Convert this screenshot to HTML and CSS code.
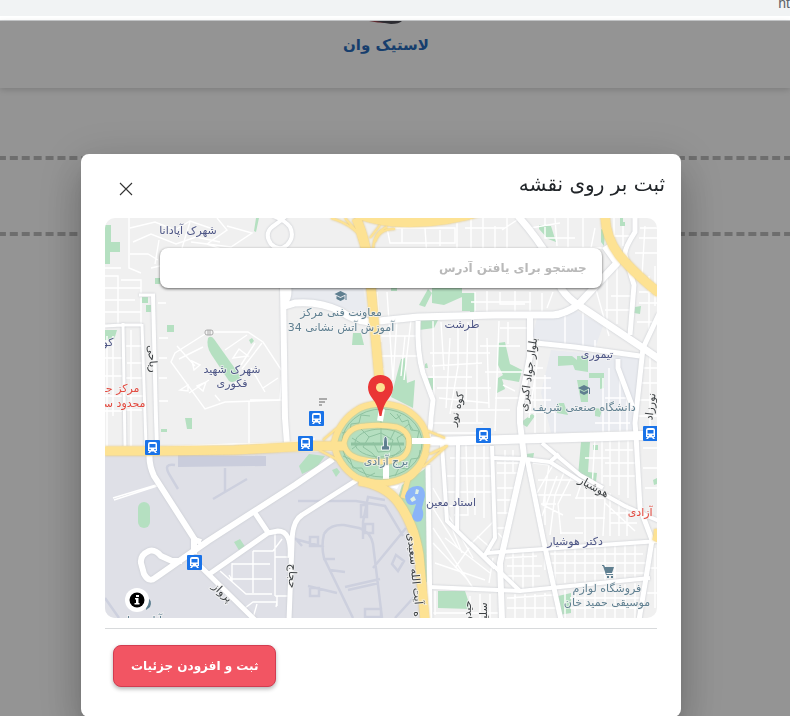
FILE: index.html
```html
<!DOCTYPE html>
<html lang="fa" dir="rtl">
<head>
<meta charset="utf-8">
<title>لاستیک وان</title>
<link rel="stylesheet" href="styles.css">
</head>
<body>

<div class="browser-bar" dir="ltr"><span>ht</span></div>

<!-- Page -->
<header class="site-header">
	<a class="logo" href="#">
		<svg width="44" height="4" viewBox="0 0 44 4"><path d="M5 0h14l4 2q-10 0-18-2z" fill="#a84a55"/><path d="M12 0h26q-3 3-11 3q-8-1-15-3z" fill="#4c4c55"/></svg>
		<span>لاستیک وان</span>
	</a>
</header>
<main class="site-main">
	<div class="dashed-box"></div>
</main>

<!-- Map modal -->
<div class="backdrop">
<div class="modal" role="dialog" aria-labelledby="modal-title">
	<div class="modal-header">
		<h2 id="modal-title">ثبت بر روی نقشه</h2>
		<button class="close" type="button" aria-label="بستن">
			<svg width="14" height="14" viewBox="0 0 14 14"><path d="M1 1l12 12M13 1L1 13" stroke="#333" stroke-width="1.1" fill="none"/></svg>
		</button>
	</div>

	<div class="map">
		<svg class="map-canvas" viewBox="0 0 552 400" preserveAspectRatio="xMidYMid slice">
			<defs>
				<g id="bus">
					<rect x="-7.500" y="-7.500" width="15" height="15" rx="1" fill="#1a73e8"/>
					<path d="M-4.500 -3.500q0-2 2-2h5q2 0 2 2v7h-1.500l1.500 2h-2l-1-1.500h-3l-1 1.500h-2l1.500-2h-1.500z" fill="#fff"/>
					<path d="M-3 -3.500h6v3.500h-6z" fill="#1a73e8"/>
					<circle cx="-2.500" cy="2" r=".8" fill="#1a73e8"/><circle cx="2.500" cy="2" r=".8" fill="#1a73e8"/>
				</g>
				<g id="school">
					<path d="M-6 -2L0 -5L6 -2L0 1z"/><path d="M-4 0L0 2L4 0V3L0 5L-4 3z"/><path d="M5 -2h1v6h-1z"/>
				</g>
			</defs>

			<!-- Land -->
			<rect width="552" height="400" fill="#f0f0f0"/>
			<path class="campus" d="M432 100l38-8 28 16-8 22-65-3zM446 132l88 8-6 72-82 3-10-40z"/>
			<path class="campus" d="M183 70h75l5 26-40-9h-38z"/>
			<path class="airport" d="M0 237L200 234L228 234L240 252L262 266L290 276L304 310L316 360L318 400H0z"/>

			<!-- Parks -->
			<g class="park">
				<path d="M0 7h6v17h9v10H5v12H0zM50 60h5v6h-5zM37 79h6v6h-6zM41 87h5v7h-5zM62 107h7v7h-7zM0 112h12l-3 10H0z"/>
				<path d="M103 120q3-3 6 1l27 38q-7 7-12 4l-18-27q-5-8-3-16z"/>
				<path d="M151 0h3l-3 14-2-1zM144 122l3-2 2 3-3 3zM80 200h7v11h-5zM56 211h6v3h-6z"/>
				<rect x="33" y="284" width="12" height="26" rx="6"/>
				<path d="M129 324l6-3 6 9-6 4zM194 248l10-12 16 2-8 11-15 7z"/>
				<path d="M227 252l5-2 3 4-4 5z"/>
				<path d="M327 70h30v9l-18 8-12-2zM357 75h13v18h-13zM314 87l9-16 4 4-7 14zM316 102h17l-4 8-15 2zM248 115h8l3 12h-12zM286 70h6v3h-6z"/>
				<path d="M296 141l4-1 2 25 8-3-2 28-22-11z M320 146l2-1 1 5h-3zM323 160h5v12h-3z"/>
				<path d="M434 7l12 1 5 16-8-3-9-10zM496 11l4 2-1 15-3-4zM515 0v8h5V4h-2V0zM530 89l6-1-1 8-6-1z"/>
				<path d="M393 125l7-1 5 22 12 6-3 12-17-3 3 10-8 4 1-15 5-3-5-10zM365 77l4-1v18h-4z"/>
				<path d="M453 138h14l5 4v-4h11v16l-13-2-2-5-15 1zM484 155h15v15l-4 1v-11h-11zM472 162h11v22h-7zM490 190l7 1-2 8-5-1zM452 185h7l4 12-11-2z"/>
				<path d="M415 205l12-9 3 2-8 11zM476 224h9l-2 30 9 1-1 9-10-6h-8z"/>
				<path d="M488 227h5v5h-5zM421 236l8-1-1 6-7-1z"/>
				<path d="M297 267l24-17 2 113-6 4-4-54-20-33zM333 373h27l6 18-33-1zM453 378l13-3v20l-12 2zM552 260l-4 2 1 5 3-1z"/>
			</g>
			<path class="airport-line" d="M73 241h88M70 247q-12-2-6 9l9 15M120 250v24M108 281l34-20" />
			<path class="apron" d="M73 237l88 1v10l-88 1z"/>
			<path class="airport-line" d="M193 283h58l29 5 18 30M280 282l-17-3-5 25 0 17M219 316q6-10 20-9l15 3q12 4 14 16l9 74M219 316q-3 12 0 24l29 60M268 350l33-40 M240 369l35-8M243 372l31-7M190 321l29 8M232 375l-29-7M218 341h12M225 352l15 2M0 380l14 20M290 400l20-22M256 287h6v12h-6zM260 306h8v9h-8zM205 319h8v9h-8zM205 370h9v8h-9zM291 337l8 6-6 10-6-7zM260 391h16v8h-16zM190 320l7 8"/>

			<!-- Side streets -->
			<g class="street">
				<path d="M24 0v50l12 5M0 50h16M25 10l25-6 20 8 15-9 20 7M28 24l18-8 25 10 20-7 24 5M25 36h18l10 6M54 22l-4 24M85 4l-8 26M112 0l10 12-20 14 14 5M122 8l25 7-21 14-40-5M68 45l-22 5"/>
				<path d="M0 58h13v48M0 70h16M0 82h17M0 94h17M16 62h20v44M16 70h20M17 82h13M16 94h20M2 118v112M8 118v80M26 112v118M0 140h17M0 158h17M0 178h17M0 193h17M21 128h16M22 145h16M21 160h16M22 178h16M21 192h16M53 85h8M54 120h9M54 140h8M54 160h8M54 183h9"/>
				<path d="M100 116L70 135l-4 9 34 47 20-7 58-2M108 114h35l15 10 19 29-2 29h-30M74 141l24-12M84 175l20-13M72 128l18 20M120 132l22-15M128 140l15-2-9-7zM95 147l-8-4 2 9zM75 172l8-5v6zM92 168l9-4-3 9zM150 125l-14 22M157 125l-20 26M146 150l14 24M158 170l15-10M144 184v44M115 183l-5-6M135 162l-15 10"/>
				<path d="M282 10h68v15h-65zM297 10v15M320 10l2 30M335 12v16M352 5v65M360 10h40M366 0v30M378 0v30M390 8v30M402 0v30M352 40h60M415 0l-18 12M272 74l4 50M282 74l6 88M292 102l-4 60M272 118h40M272 138h40M278 150l-2 17M300 118l-4 40M306 102l-7 60"/>
				<path d="M328 103l1 78M336 104l3 48M345 120l-4 70M353 103v45l-8 48M363 104l-2 80M372 104v100M382 120l2 70M394 103l-4 110M403 104v22M325 135h60M327 148l50-3M322 159h45M332 170h54M334 180l50 5M345 192h60M375 128h40M380 154h38M390 180h28M395 110h30M398 167l12 6"/>
				<path d="M370 74v23M382 73v23M395 74v12h25M410 73v23M425 74v23M437 75v20M366 84h60M448 74l-6 16M462 72v8"/>
				<path d="M440 0v20h30M450 0l2 28M463 0v30M478 0v30M490 10l-4 20M425 10l30-5M440 30h60M509 0v18h20M518 8v20M535 10h17M540 8l-3 50M534 20h18M530 35h22M512 48v58M502 58v48M490 68l14 50M506 78h20M500 92h27M534 74h18M534 85h20M532 104h20M544 58v54M550 48v40M460 98v30M478 90v42M490 122v12"/>
				<path d="M432 128v18l-8 54M438 150h-12M424 160h22M422 170h24M420 182h26M420 194h30M430 157v58M440 157v58M450 195v20M498 160v54M504 150v64M515 150v64M522 175v40M490 205h35M500 180h25M545 138v74M535 150h17M532 165h20M530 182h22M532 198h20"/>
			</g>
			<g class="street">
				<path d="M328 205h50M332 215h46M361 227l2 70h-14M370 225v72M379 228v72M345 240h42M342 258h46M342 274h46M343 288h20M328 270l40 70M328 290l25 40 M328 310l40 60M328 325l35 37M330 345l50 17M340 320l45 35M347 310l10 25M367 325l22-22M372 318l16 14M350 350l14-20"/>
				<path d="M392 245h22M392 255h21M392 270h17M392 282h15M392 295h13M392 310h10M400 232v64M408 232v22M388 340l-4 25M393 315l9 10M428 245l16 2-6 40 20 10M433 262h40M430 277h36M436 286h15M440 277v30M448 247l-16 28M452 258l-15 40M460 252l-10 25-5 40M468 256l-15 30 3 30M477 263l-6 18M480 263v60M490 268v50M470 280h30l-2 38M470 300h30M505 275v43M514 281v37M522 286v32M500 285l30 28M455 315h23M505 295h25M505 305h27"/>
				<path d="M490 220l-3 50M497 218v48M505 220v48M514 220v57M523 220v60M480 240h25M500 232h28M500 245h30M498 258h32M538 230h14M538 250h14M540 270h12M541 300h11"/>
				<path d="M408 334v38M418 334v38M428 332v40M400 340l32-2M402 348h35M400 358h35M443 345h100M446 355h95M440 332v20M450 330v35M460 329v36M470 329v36M480 328v36M490 328v36M500 327v35M510 327v35M520 326v35M530 326v35M445 336h93M402 380l46-3M402 390h50M410 376v24M420 376v24M430 376v24M440 375v25M460 372v28M470 370v30M480 370v30M490 369v31M500 368v32M510 367v33M520 366v34M530 365v35M465 380h72M465 390h70M550 330v60M545 350h7M542 375h10M330 373v24M365 378v22M375 376v24M385 376v24M328 395h65"/>
				<path d="M9 282l43-14M8 280l43-13M115 353l26 23h26M127 345v17l-3-5M127 346h38M125 361h42M148 333v42M148 333h20l9-12M170 315v63M170 339h14M140 390l8-6h24l-1 5M148 400l4-14M170 378h14M172 378v10"/>
			</g>

			<!-- Roads -->
			<g class="road">
				<path class="w3" d="M34 77H50M0 108L17 107L37 107M18 105L20 230M37 106L41 228"/>
				<path class="w4" d="M48 77L51 200L52 230"/>
				<path class="w4" d="M168 -2q13 5 17 11q5 10-3 18q-8 7-16-1q-7-10 1-17q9-6 16-13"/>
				<path class="w6" d="M172 29L178 70L180 200L182 226M180 84q5-5 3-18"/>
				<path class="w7" d="M180 88L190 85Q215 83 235 93Q250 103 264 104L313 99L390 97H448Q460 96 473 87"/>
				<path class="w7" d="M413 -2Q434 22 445 42L456 70Q463 81 475 88L538 130L554 141M472 88L512 45L500 28"/>
				<path class="w5" d="M525 117L529 67L520 37Q519 31 530 14V0M554 96L538 130L530 205L531 217L535 290L547 322L541 360L534 402"/>
				<path class="w6" d="M425 98V138L415 190V205L419 238L395 345L397 402"/>
				<path class="w5" d="M422 240L438 320L456 402M431 125L470 129L535 138M513 141V150L528 190"/>
				<path class="w5" d="M313 103Q312 135 318 155L328 182L326 200Q326 213 322 221"/>
				<path class="w4" d="M388 240L420 241L445 244L475 263L520 288L554 303M437 225L475 257L498 270M446 243L454 236"/>
				<path class="w4" d="M382 335L554 323M365 325L415 373M325 369L415 373L545 360M337 227L342 303L390 350M353 227L352 313M387 228L390 320L380 337"/>
				<path class="w5" d="M323 247L325 402"/>
				<path class="w9" d="M307 223H345L554 217"/>
				<path class="w6" d="M45 233Q43 245 49 258L90 322L96 324M228 241L190 267L103 323L50 360Q44 365 39 356L36 345Q35 337 44 333Q50 331 56 338L67 343H77M89 319V336"/>
				<path class="w5" d="M252 262L197 297Q187 303 187 325L184 402M185 340Q187 313 173 313L163 315L103 357M150 295L164 316M90 343L150 402"/>
			</g>
			<path class="street" d="M0 229h50l80-3 50-1 30-4" stroke-width="2"/>

			<!-- Azadi roundabout and highways -->
			<ellipse cx="277" cy="225" rx="45" ry="38" fill="#b5dfc0"/>
			<g class="garden">
				<ellipse cx="276" cy="225" rx="26" ry="14"/><ellipse cx="277" cy="225" rx="40" ry="34"/>
				<path d="M276 200v25M256 211l8 8-6 10 9 6 7 8 12-3 10-8-4-12 8-5M264 219l12-4 12 7-3 11-12 1-5-10M290 212l-5 10M247 220l8 5-8 6M292 196l5 8 6-2 3 10 8 1-2 9M237 215l8-2 1-7 8-1 2-8 9 1M238 238l7 3 3 9 9 0 5 9 8-4M290 258l4-8 9 1 3-10 8-1 1-8M285 195l6 6 5-4M298 211l6-5 4 6"/>
				<path d="M246 226h53" stroke-width="3"/>
			</g>
			<path class="road-plain" d="M281 243v18M277 191l-2 12"/>
			<g class="highway">
				<path class="w9" d="M0 233H50L130 232L205 228H240"/>
				<path class="w9" d="M251 0Q263 25 266 70L274 158V184"/>
				<path d="M238 -7Q262 9 305 9Q345 9 390 -6V-10H238z" fill="#fde293" stroke="none"/>
				<path class="w2" d="M240 0L252 14L257 30M226 0Q250 7 260 25M282 9Q268 15 268 33M275 7L265 20M290 11Q275 10 270 24"/>
				<path class="w9" d="M500 -2Q501 20 514 37Q529 55 554 75"/>
				<path class="w6" d="M229 225Q234 202 255 190Q276 181 300 191Q321 203 322 223Q321 246 303 258Q279 271 252 260Q232 247 229 225z"/>
				<path class="w5" d="M239 225Q242 209 260 208Q276 206 292 209Q304 213 304 224Q304 240 290 242Q275 246 255 241Q240 237 239 225z"/>
				<path class="w9" d="M254 263Q280 267 293 284Q309 306 314 337L320 402"/>
				<path class="w5" d="M322 234Q314 255 303 261L298 280"/>
				<path class="w2" d="M218 222L232 210M214 232L235 243M323 213L340 220M325 236L342 228L318 249"/>
				<path class="w6" d="M550 323q2-4 2-12"/>
			</g>
			<path d="M285 269l9-2-2 4z" fill="#fff"/>
			<path class="road-plain" d="M307 223h24"/>
			<path d="M300 278q3-10 12-10 8-1 8 10l-3 12q3 8-1 13-7 3-9-5l4-12q-10 4-11-8z" fill="#8ab4f8"/>
			<path d="M305 281l4-3 2 4-4 2zM311 271l3 1-1 4-3 0z" fill="#dff0e4"/>

			<!-- Places -->
			<g fill="#5f7f90">
				<use href="#school" x="235.500" y="78"/>
				<use href="#school" x="479" y="172"/>
				<path d="M497 347h2l1 2h9l-2 6h-6l1 1h6v1h-7l-3-9h-1zM502 358h2v2h-2zM506 358h2v2h-2z"/>
				<path d="M278.500 224q0-5 2-6q2 1 2 6v4h2v4h-8v-4h2z" stroke="#fff" stroke-width=".8"/>
				<path d="M42 380q6 2 3 9l-4 3z"/>
			</g>
			<path d="M214 181h8M214 184h6M214 187h3" stroke="#aaa" stroke-width="2"/>
			<g fill="#f4f4f4" stroke="#999" stroke-width=".8"><rect x="100" y="112" width="8" height="5" rx="2"/><path d="M103 112v5M105 112v5" /></g>
			<use href="#bus" x="211.500" y="200.500"/>
			<use href="#bus" x="200.500" y="225.500"/>
			<use href="#bus" x="47.500" y="229.500"/>
			<use href="#bus" x="378.500" y="217.500"/>
			<use href="#bus" x="545.500" y="215.500"/>
			<use href="#bus" x="89.500" y="344.500"/>

			<g class="label area">
				<text x="83" y="16">شهرک آپادانا</text>
				<text x="127" y="155">شهرک شهید</text>
				<text x="127" y="169">فکوری</text>
				<text x="357" y="110">طرشت</text>
				<text x="492" y="140">تیموری</text>
				<text x="346" y="288">استاد معین</text>
				<text x="470" y="327">دکتر هوشیار</text>
				<text x="3" y="128">کو</text>
			</g>
			<g class="label place">
				<text x="236" y="98">معاونت فنی مرکز</text>
				<text x="236" y="113">آموزش آتش نشانی 34</text>
				<text x="479" y="193">دانشگاه صنعتی شریف</text>
				<text x="281" y="247">برج آزادی</text>
				<text x="502" y="374">فروشگاه لوازم</text>
				<text x="502" y="388">موسیقی حمید خان</text>
				<text x="44" y="406">مهرآباد تهران</text>
			</g>
			<g class="label metro">
				<text x="16" y="174">مرکز جـ</text>
				<text x="18" y="189">محدود سـ</text>
				<text x="541" y="298">ن آزادی</text>
			</g>
			<g class="label way">
				<text transform="translate(44 141) rotate(85)">ریاحی</text>
				<text transform="translate(427 157) rotate(-82)">بلوار جواد اکبری</text>
				<text transform="translate(355 192) rotate(-75)">کوه نور</text>
				<text transform="translate(549 189) rotate(-83)">نورزاد</text>
				<text transform="translate(487 272) rotate(29)">هوشیار</text>
				<text transform="translate(115 377) rotate(44)">پرواز</text>
				<text transform="translate(184 358) rotate(91)">حجاج</text>
				<text transform="translate(306 351) rotate(84)">آیت الله سعیدی</text>
				<text transform="translate(309 396) rotate(88)">ه</text>
				<text transform="translate(366 393) rotate(-90)">حیدر</text>
				<text transform="translate(382 394) rotate(-90)">سلیـ</text>
			</g>

			<!-- Selected point -->
			<path d="M274.500 198Q273 187 267 180Q263 175 263 169Q264 157.500 275.500 157Q287 157.500 288 169Q288 175 284 180Q278 187 276.500 198z" fill="#ea3535"/>
			<circle cx="275.500" cy="169.500" r="4.500" fill="#fde293"/>
		</svg>

		<input class="search" type="text" placeholder="جستجو برای یافتن آدرس" aria-label="جستجو برای یافتن آدرس">
		<button class="info" type="button" aria-label="اطلاعات نقشه">
			<svg width="24" height="24" viewBox="0 0 24 24"><circle cx="12" cy="12" r="7.500"/><path d="M11 7h3v2h-3zM10 10h3.500v5h1v1.500h-5v-1.500h1.500v-3.500h-1z" fill="#fff"/></svg>
		</button>
	</div>

	<div class="modal-footer">
		<button class="submit" type="button">ثبت و افزودن جزئیات</button>
	</div>
</div>
</div>

</body>
</html>
```
FILE: styles.css
```css
* { box-sizing:border-box; }

body {
	margin:0;
	background:#fff;
	font-family:"DejaVu Sans", sans-serif;
	color:#212529;
	overflow:hidden;
}

button, input { font-family:inherit; }

.browser-bar {
	display:flex;
	justify-content:flex-end;
	height:21px;
	background:#f1f3f4;
	border-bottom:1px solid #c8cacc;
	box-shadow:inset 0 -4px #fff;
	color:#5f6368;
	font-family:"Liberation Sans", sans-serif;
	font-size:14px;
	line-height:6px;
}

/* Page */
.site-header {
	display:flex;
	justify-content:center;
	height:67px;
	padding-right:18px;
	box-shadow:0 2px 6px rgba(0,0,0,.16);
}

.logo {
	display:flex;
	flex-direction:column;
	align-items:center;
	gap:8px;
	color:#286cbc;
	font-size:15px;
	font-weight:bold;
	line-height:24px;
	text-decoration:none;
}

.site-main { padding-top:68px; }

.dashed-box {
	height:80px;
	margin:0 -14px;
	border:4px dashed #bebebe;
}

/* Modal */
.backdrop {
	position:fixed;
	top:21px;
	right:0;
	bottom:0;
	left:0;
	padding:133px 28px 0 0;
	background:rgba(0,0,0,.42);
}

.modal {
	max-width:600px;
	margin:0 auto;
	padding:16px 24px 30px;
	background:#fff;
	border-radius:8px;
	box-shadow:0 11px 15px -7px rgba(0,0,0,.2), 0 24px 38px 3px rgba(0,0,0,.14), 0 9px 46px 8px rgba(0,0,0,.12);
}

.modal-header {
	display:flex;
	justify-content:space-between;
	height:48px;
	margin-right:-8px;
	padding-left:8px;
}

.modal-header h2 {
	margin:0;
	font-size:20px;
	font-weight:normal;
	line-height:28px;
}

.close {
	display:flex;
	align-items:center;
	justify-content:center;
	width:26px;
	height:26px;
	margin-top:6px;
	padding:0;
	border:0;
	background:none;
}

/* Map */
.map {
	position:relative;
	height:400px;
	border-radius:10px;
	overflow:hidden;
}

.map-canvas {
	display:block;
	width:100%;
	height:100%;
}

.search {
	position:absolute;
	top:30px;
	left:10%;
	width:80%;
	height:40px;
	padding:0 15px;
	border:0;
	border-radius:8px;
	background:#fff;
	box-shadow:0 1px 3px rgba(0,0,0,.6);
	font-size:12px;
}

.search::placeholder {
	color:#b9b9b9;
	font-weight:bold;
	opacity:1;
}

.info {
	position:absolute;
	bottom:6px;
	left:20px;
	width:24px;
	height:24px;
	padding:0;
	border:0;
	border-radius:50%;
	background:#fff;
}

.campus { fill:#e9ebf0; }
.airport { fill:#dfe0e7; }
.apron { fill:#cacddc; }
.airport-line { fill:none; stroke:#cdd0de; stroke-width:2.5; }
.park path, .park rect { fill:#b5e0c1; }
.street { fill:none; stroke:#fff; stroke-width:1.4; }
.road { fill:none; stroke:#fff; stroke-linejoin:round; filter:drop-shadow(0 0 1px #c3c6cc); }
.road-plain { fill:none; stroke:#fff; stroke-width:6; }
.highway { fill:none; stroke:#fde293; stroke-linejoin:round; filter:drop-shadow(0 0 1px #e0c070); }
.garden { fill:none; stroke:#8fc2a0; }

.w2 { stroke-width:2; }
.w3 { stroke-width:3; }
.w4 { stroke-width:4; }
.w5 { stroke-width:5; }
.w6 { stroke-width:6; }
.w7 { stroke-width:7; }
.w9 { stroke-width:9; }

.label {
	direction:rtl;
	text-anchor:middle;
	font-size:11px;
	paint-order:stroke;
	stroke:rgba(244,244,244,.7);
	stroke-width:2;
}

.area { fill:#4d5585; }
.place { fill:#5f7f90; }
.metro { fill:#e2483d; }
.way { fill:#3c4043; }

/* Footer */
.modal-footer {
	display:flex;
	justify-content:flex-end;
	margin-top:10px;
	padding:16px 8px 0;
	border-top:1px solid #d8dadc;
}

.submit {
	height:42px;
	padding:0 17px;
	border:1px solid #d23c50;
	border-radius:8px;
	background:#f25563;
	box-shadow:0 2px 4px rgba(0,0,0,.3);
	color:#fff;
	font-size:12px;
	font-weight:bold;
}
```
